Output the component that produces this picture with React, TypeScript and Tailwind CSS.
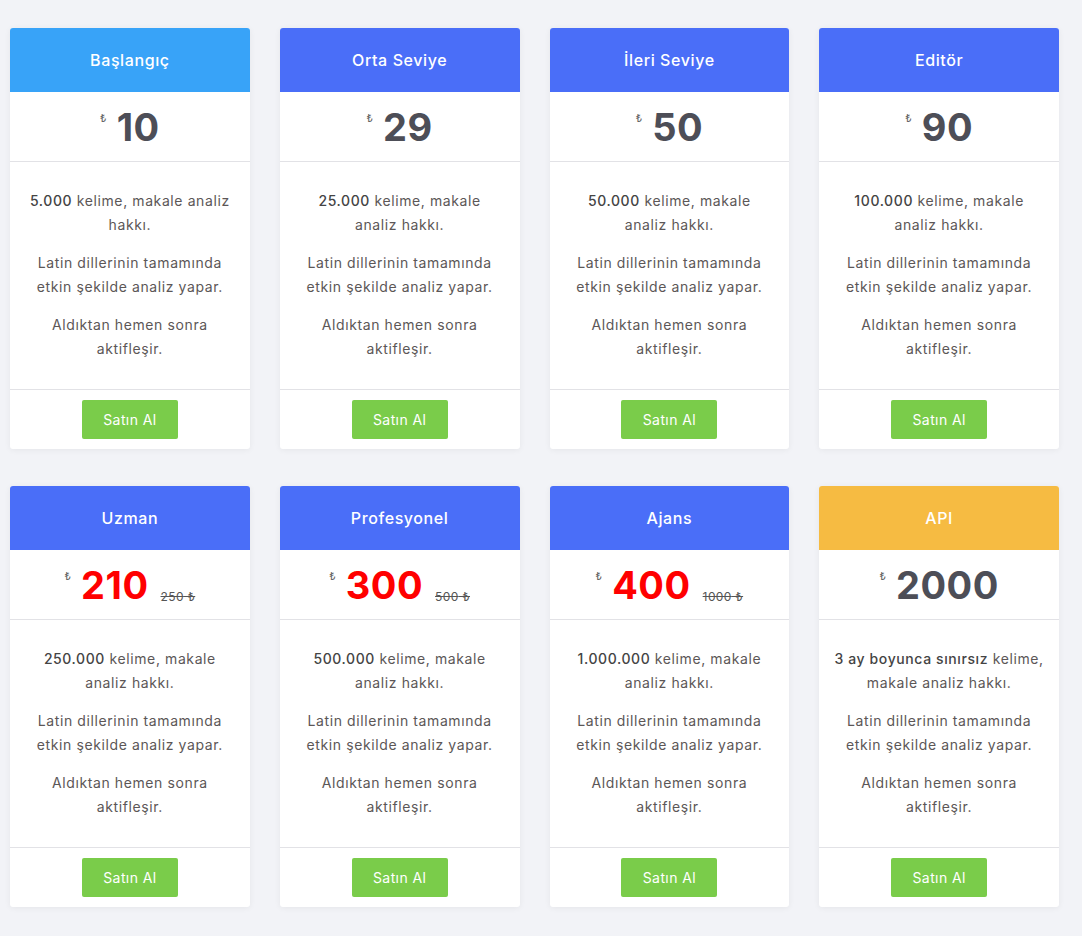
const plans = [
  { name: "Başlangıç", head: "bg-[#38a3f8]", price: "10", words: "5.000", rest: [" kelime, makale analiz", "hakkı."] },
  { name: "Orta Seviye", head: "bg-[#4a6ef8]", price: "29", words: "25.000", rest: [" kelime, makale", "analiz hakkı."] },
  { name: "İleri Seviye", head: "bg-[#4a6ef8]", price: "50", words: "50.000", rest: [" kelime, makale", "analiz hakkı."] },
  { name: "Editör", head: "bg-[#4a6ef8]", price: "90", words: "100.000", rest: [" kelime, makale", "analiz hakkı."] },
  { name: "Uzman", head: "bg-[#4a6ef8]", price: "210", old: "250", words: "250.000", rest: [" kelime, makale", "analiz hakkı."] },
  { name: "Profesyonel", head: "bg-[#4a6ef8]", price: "300", old: "500", words: "500.000", rest: [" kelime, makale", "analiz hakkı."] },
  { name: "Ajans", head: "bg-[#4a6ef8]", price: "400", old: "1000", words: "1.000.000", rest: [" kelime, makale", "analiz hakkı."] },
  { name: "API", head: "bg-[#f6bb42]", price: "2000", words: "3 ay boyunca sınırsız", rest: [" kelime,", "makale analiz hakkı."] },
];

type Plan = (typeof plans)[number];

function Card({ plan }: { plan: Plan }) {
  const sale = !!plan.old;
  return (
    <div className="flex flex-col overflow-hidden rounded-[3px] bg-white shadow-[0_1px_6px_rgba(0,0,0,0.06)]">
      <div className={`flex h-16 items-center justify-center text-[16px] font-medium tracking-[0.6px] text-white ${plan.head}`}>
        {plan.name}
      </div>
      <div className="flex h-[70px] items-center justify-center border-b border-[#e2e2e6]">
        <div className="flex items-start">
          <span className="mt-[3px] mr-[10px] text-[11px] leading-[14px] text-[#666]">₺</span>
          <span className={`text-[38px] leading-[1] font-bold tracking-[0.5px] ${sale ? "text-[#ff0000]" : "text-[#4d4e57]"}`}>
            {plan.price}
          </span>
          {sale && (
            <span className="mt-[25px] ml-[12px] text-[12px] leading-[12px] tracking-[0.4px] text-[#555] line-through">
              {plan.old} ₺
            </span>
          )}
        </div>
      </div>
      <div className="flex flex-col items-center gap-[14px] border-b border-[#e2e2e6] pt-[27px] pb-[28px] text-center text-[14px] leading-[24px] tracking-[0.6px] text-[#5c5757]">
        <p>
          <span className="block whitespace-nowrap">
            <span className="font-medium text-[#444]">{plan.words}</span>
            {plan.rest[0]}
          </span>
          <span className="block whitespace-nowrap">{plan.rest[1]}</span>
        </p>
        <p>
          <span className="block whitespace-nowrap">Latin dillerinin tamamında</span>
          <span className="block whitespace-nowrap">etkin şekilde analiz yapar.</span>
        </p>
        <p>
          <span className="block whitespace-nowrap">Aldıktan hemen sonra</span>
          <span className="block whitespace-nowrap">aktifleşir.</span>
        </p>
      </div>
      <div className="flex justify-center pt-[10px] pb-[10px]">
        <button className="h-[39px] w-[96px] rounded-[2px] bg-[#7acc4a] text-[14px] tracking-[0.4px] text-white">Satın Al</button>
      </div>
    </div>
  );
}

export default function App() {
  return (
    <div className="min-h-screen bg-[#f2f3f7] px-[10px] pt-[28px] pb-[29px] font-['Inter',sans-serif]">
      <div className="grid grid-cols-[repeat(4,239.75px)] gap-x-[30px] gap-y-[37px]">
        {plans.map((p) => (
          <Card key={p.name} plan={p} />
        ))}
      </div>
    </div>
  );
}
